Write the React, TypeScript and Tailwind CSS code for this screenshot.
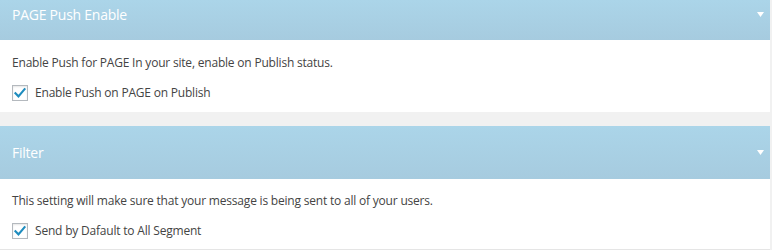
import React from "react";

function Check() {
  return (
    <span className="w-[16px] h-[16px] border border-[#b4b9be] bg-white shadow-[inset_0_1px_2px_rgba(0,0,0,0.1)] flex items-center justify-center shrink-0">
      <svg width="14" height="14" viewBox="0 0 20 20">
        <path d="M3.5 10.5 L7.8 14.8 L16.5 4.5" fill="none" stroke="#1e8cbe" strokeWidth="3" strokeLinecap="square" />
      </svg>
    </span>
  );
}

function Arrow() {
  return (
    <svg width="7" height="5" viewBox="0 0 7 5" className="absolute right-[6px]">
      <path d="M0 0 H7 L3.5 5 Z" fill="#ffffff" />
    </svg>
  );
}

export default function App() {
  return (
    <div
      className="w-[772px] h-[250px] bg-[#f1f1f1] overflow-hidden text-[#444]"
      style={{ fontFamily: '"Open Sans", "Noto Sans", sans-serif' }}
    >
      <div className="w-[770px]">
        <div className="relative h-[40px] bg-gradient-to-b from-[#abd5e9] to-[#a6cbdf] flex items-center pb-[10px] px-[12px]">
          <span className="text-white text-[14px] leading-[20px] tracking-[-0.25px]">PAGE Push Enable</span>
          <div className="absolute right-0 top-[12px] w-[20px] flex justify-end"><Arrow /></div>
        </div>
        <div className="bg-white h-[72px] px-[12px] pt-[13px]">
          <p className="text-[12px] leading-[20px] tracking-[-0.2px]">Enable Push for PAGE In your site, enable on Publish status.</p>
          <label className="mt-[12px] flex items-center gap-[7px] text-[12px] leading-[16px] tracking-[-0.2px]">
            <Check />
            <span>Enable Push on PAGE on Publish</span>
          </label>
        </div>
        <div className="h-[14px]" />
        <div className="relative h-[53px] bg-gradient-to-b from-[#abd5e9] to-[#a6cbdf] flex items-center px-[12px]">
          <span className="text-white text-[14px] leading-[20px] tracking-[-0.25px]">Filter</span>
          <div className="absolute right-0 top-[24px] w-[20px] flex justify-end"><Arrow /></div>
        </div>
        <div className="bg-white h-[71px] px-[12px] pt-[12px] border-b border-[#e5e5e5]">
          <p className="text-[12px] leading-[20px] tracking-[-0.2px]">This setting will make sure that your message is being sent to all of your users.</p>
          <label className="mt-[12px] flex items-center gap-[7px] text-[12px] leading-[16px] tracking-[-0.2px]">
            <Check />
            <span>Send by Dafault to All Segment</span>
          </label>
        </div>
      </div>
    </div>
  );
}
